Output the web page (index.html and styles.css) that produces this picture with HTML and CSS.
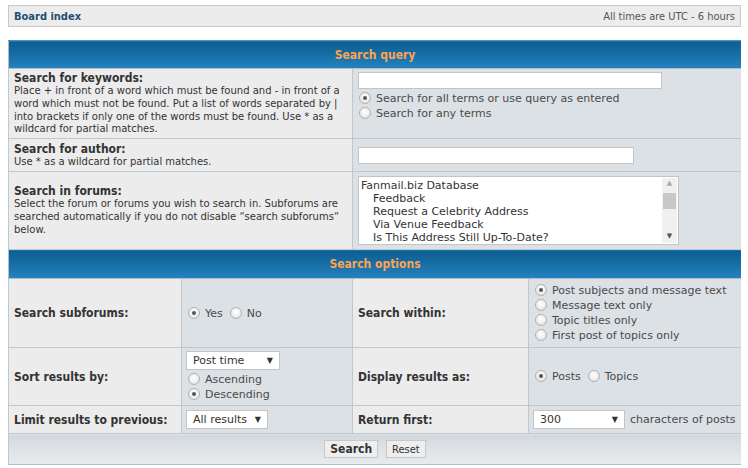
FILE: index.html
```html
<!DOCTYPE html>
<html>
<head>
<meta charset="utf-8">
<title>Search</title>
<link rel="stylesheet" href="styles.css">
</head>
<body>
<div class="navbar">
  <a class="nav-link" href="#">Board index</a>
  <span class="nav-time">All times are UTC - 6 hours</span>
</div>

<table class="panel">
  <colgroup>
    <col class="c1"><col class="c2"><col class="c3"><col class="c4">
  </colgroup>
  <tr class="h-cat1"><th colspan="4" class="cat">Search query</th></tr>
  <tr class="r-keywords">
    <td colspan="2" class="lbl">
      <b class="title">Search for keywords:</b>
      <span class="explain">Place + in front of a word which must be found and - in front of a word which must not be found. Put a list of words separated by | into brackets if only one of the words must be found. Use * as a wildcard for partial matches.</span>
    </td>
    <td colspan="2" class="val val-top">
      <input type="text" class="inp inp-kw">
      <label class="opt"><input type="radio" name="terms" checked>Search for all terms or use query as entered</label>
      <label class="opt"><input type="radio" name="terms">Search for any terms</label>
    </td>
  </tr>
  <tr class="r-author">
    <td colspan="2" class="lbl">
      <b class="title">Search for author:</b>
      <span class="explain">Use * as a wildcard for partial matches.</span>
    </td>
    <td colspan="2" class="val"><input type="text" class="inp inp-au"></td>
  </tr>
  <tr class="r-forums">
    <td colspan="2" class="lbl">
      <b class="title">Search in forums:</b>
      <span class="explain">Select the forum or forums you wish to search in. Subforums are searched automatically if you do not disable “search subforums“ below.</span>
    </td>
    <td colspan="2" class="val">
      <div class="listbox">
        <div class="list-items">
          <div>Fanmail.biz Database</div>
          <div class="sub">Feedback</div>
          <div class="sub">Request a Celebrity Address</div>
          <div class="sub">Via Venue Feedback</div>
          <div class="sub">Is This Address Still Up-To-Date?</div>
        </div>
        <div class="scrollbar">
          <span class="arr up">▲</span>
          <span class="thumb"></span>
          <span class="arr down">▼</span>
        </div>
      </div>
    </td>
  </tr>
  <tr class="h-cat2"><th colspan="4" class="cat">Search options</th></tr>
  <tr class="r-sub">
    <td class="lbl"><b class="title">Search subforums:</b></td>
    <td class="val">
      <div class="inline-opts">
        <label class="opt"><input type="radio" name="sf" checked>Yes</label>
        <label class="opt"><input type="radio" name="sf">No</label>
      </div>
    </td>
    <td class="lbl"><b class="title">Search within:</b></td>
    <td class="val">
      <label class="opt"><input type="radio" name="sw" checked>Post subjects and message text</label>
      <label class="opt"><input type="radio" name="sw">Message text only</label>
      <label class="opt"><input type="radio" name="sw">Topic titles only</label>
      <label class="opt"><input type="radio" name="sw">First post of topics only</label>
    </td>
  </tr>
  <tr class="r-sort">
    <td class="lbl"><b class="title">Sort results by:</b></td>
    <td class="val">
      <span class="select sel-sort">Post time<span class="caret">▼</span></span>
      <label class="opt"><input type="radio" name="sd">Ascending</label>
      <label class="opt"><input type="radio" name="sd" checked>Descending</label>
    </td>
    <td class="lbl"><b class="title">Display results as:</b></td>
    <td class="val">
      <div class="inline-opts">
        <label class="opt"><input type="radio" name="dr" checked>Posts</label>
        <label class="opt"><input type="radio" name="dr">Topics</label>
      </div>
    </td>
  </tr>
  <tr class="r-limit">
    <td class="lbl"><b class="title">Limit results to previous:</b></td>
    <td class="val"><span class="select sel-limit">All results<span class="caret">▼</span></span></td>
    <td class="lbl"><b class="title">Return first:</b></td>
    <td class="val">
      <div class="ret-row"><span class="select sel-ret">300<span class="caret">▼</span></span><span class="after">characters of posts</span></div>
    </td>
  </tr>
  <tr class="r-foot">
    <td colspan="4" class="foot">
      <button class="btn btn-main">Search</button><button class="btn">Reset</button>
    </td>
  </tr>
</table>
</body>
</html>
```

FILE: styles.css
```css
body {
  margin: 5px 7px 0 8px;
  background: #ffffff;
  font-family: "DejaVu Sans Condensed", "DejaVu Sans", Verdana, sans-serif;
  color: #333333;
}

.navbar {
  display: flex;
  justify-content: space-between;
  align-items: center;
  height: 22px;
  box-sizing: border-box;
  padding: 0 5px 0 5px;
  background: #ececec;
  border: 1px solid #c9c9c9;
  width: 733px;
}

.nav-link {
  font-size: 11px;
  font-weight: bold;
  color: #1d4f72;
  text-decoration: none;
}

.nav-time {
  font-size: 11px;
  color: #555555;
}

.panel {
  margin-top: 13px;
  width: 733px;
  table-layout: fixed;
  border-collapse: collapse;
  border: 1px solid #b2bdc6;
}

.c1 { width: 173px; }
.c2 { width: 171px; }
.c3 { width: 176px; }
.c4 { width: 213px; }

.cat {
  background: linear-gradient(#0d5f93 0%, #13699f 35%, #2483bf 100%);
  color: #ffa34f;
  font-size: 12px;
  line-height: 14px;
  font-weight: bold;
  text-align: center;
  padding: 0;
  border: 1px solid #b2bdc6;
  border-top: 1px solid #4f8fb9;
}

.h-cat1 { height: 28px; }
.h-cat2 { height: 29px; }
.r-keywords { height: 70px; }
.r-author { height: 33px; }
.r-forums { height: 78px; }
.r-sub { height: 69px; }
.r-sort { height: 58px; }
.r-limit { height: 28px; }
.r-foot { height: 31px; }

td {
  vertical-align: middle;
  border: 1px solid #c0c8cf;
  padding: 0 4px 0 5px;
  font-size: 11px;
  line-height: 15px;
}

.lbl {
  background: #ececec;
  font-size: 12px;
  line-height: 14px;
}

.val {
  background: #dce1e5;
  color: #4a4a4a;
  font-family: "DejaVu Sans", Verdana, sans-serif;
  font-size: 11px;
  line-height: 15px;
}

.val-top {
  vertical-align: top;
  padding-top: 3px;
}

.title {
  display: block;
  font-size: 12px;
  color: #333333;
  line-height: 14px;
}

.explain {
  display: block;
  font-family: "DejaVu Sans", Verdana, sans-serif;
  font-size: 10px;
  line-height: 12.8px;
  color: #333333;
}

.inp {
  display: block;
  box-sizing: border-box;
  height: 17px;
  border: 1px solid #c4c4c4;
  background: #ffffff;
  margin: 0;
  padding: 0 3px;
}

.inp-kw { width: 304px; margin-bottom: 2px; }
.inp-au { width: 276px; }

.opt {
  display: block;
  white-space: nowrap;
  cursor: default;
  height: 15px;
}

.inline-opts {
  display: flex;
  gap: 6px;
}

.opt input {
  appearance: none;
  -webkit-appearance: none;
  width: 12px;
  height: 12px;
  margin: 0 5px 0 1px;
  border: 1px solid #b0b0b0;
  border-radius: 50%;
  background: radial-gradient(circle at 50% 40%, #ffffff 0%, #f0f0f0 50%, #d6d6d6 100%);
  vertical-align: -2px;
  box-sizing: border-box;
  position: relative;
}

.opt input:checked::after {
  content: "";
  position: absolute;
  left: 3px;
  top: 3px;
  width: 4px;
  height: 4px;
  border-radius: 50%;
  background: #555555;
}

.listbox {
  display: flex;
  width: 321px;
  height: 69px;
  box-sizing: border-box;
  border: 1px solid #c4c4c4;
  background: #ffffff;
  font-size: 11px;
  line-height: 13px;
  color: #333333;
}

.list-items {
  flex: 1;
  padding: 2px 0 0 2px;
  overflow: hidden;
  white-space: nowrap;
}

.list-items .sub { padding-left: 12px; }

.scrollbar {
  width: 15px;
  margin: 1px 1px 1px 0;
  background: #f0f0f0;
  display: flex;
  flex-direction: column;
  align-items: center;
  position: relative;
}

.arr {
  font-size: 7px;
  line-height: 10px;
  color: #a8a8a8;
}

.arr.down {
  position: absolute;
  bottom: 2px;
  color: #555555;
}

.thumb {
  width: 13px;
  height: 16px;
  margin-top: 5px;
  background: #c8c8c8;
}

.select {
  display: flex;
  justify-content: space-between;
  align-items: center;
  box-sizing: border-box;
  height: 19px;
  border: 1px solid #c4c4c4;
  background: #ffffff;
  padding: 0 6px 0 6px;
  color: #333333;
  font-size: 11px;
}

.caret {
  font-size: 8px;
  color: #333333;
}

.sel-sort { width: 94px; margin: 0 0 2px -1px; }
.sel-limit { width: 82px; margin-left: -1px; }
.sel-ret { width: 92px; flex: none; margin-left: -1px; }

.ret-row {
  display: flex;
  align-items: center;
  gap: 5px;
  white-space: nowrap;
}

.foot {
  background: linear-gradient(#d3d8dd, #e9ecee);
  text-align: center;
  padding: 0;
  border-top: 1px solid #c0c8cf;
  border-bottom: 1px solid #b2bdc6;
}

.btn {
  font-family: "DejaVu Sans Condensed", "DejaVu Sans", sans-serif;
  font-size: 11px;
  color: #333333;
  height: 18px;
  padding: 0 5px;
  margin: 0 4px;
  border: 1px solid #c8c8c8;
  background: #eeeeee;
  vertical-align: middle;
}

.btn-main {
  font-size: 12px;
  font-weight: bold;
}
```
